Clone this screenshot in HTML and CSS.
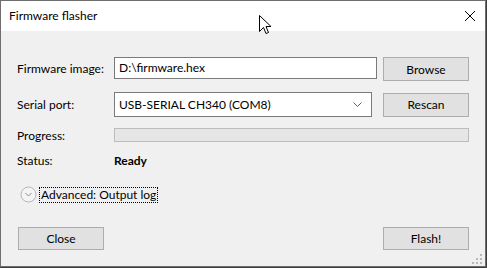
FILE: index.html
```html
<!DOCTYPE html>
<html lang="en">
<head>
    <meta charset="UTF-8">
    <title>Firmware flasher</title>
    <link rel="stylesheet" href="styles.css">
</head>
<body>
    <div class="window">
        <div class="titlebar">
            <span class="title">Firmware flasher</span>
            <svg class="close-x" width="10" height="10" viewBox="0 0 10 10">
                <path d="M0 0 L10 10 M10 0 L0 10" stroke="#000" stroke-width="1" fill="none"/>
            </svg>
        </div>

        <div class="content">
            <div class="row row-image">
                <label class="label">Firmware image:</label>
                <div class="textbox">D:\firmware.hex</div>
                <button class="btn">Browse</button>
            </div>

            <div class="row row-port">
                <label class="label">Serial port:</label>
                <div class="combobox">
                    <span>USB-SERIAL CH340 (COM8)</span>
                    <svg class="chevron" width="9" height="5" viewBox="0 0 9 5">
                        <path d="M0.5 0.5 L4.5 4.5 L8.5 0.5" stroke="#606060" fill="none"/>
                    </svg>
                </div>
                <button class="btn">Rescan</button>
            </div>

            <div class="row row-progress">
                <label class="label">Progress:</label>
                <div class="progress"></div>
            </div>

            <div class="row row-status">
                <label class="label">Status:</label>
                <span class="status">Ready</span>
            </div>

            <div class="expander">
                <svg class="expander-icon" width="17" height="17" viewBox="0 0 17 17">
                    <circle cx="8.5" cy="8.5" r="7.5" stroke="#b4b4b4" fill="#f4f4f4"/>
                    <path d="M5.5 7 L8.5 10 L11.5 7" stroke="#8a8a8a" fill="none"/>
                </svg>
                <span class="expander-text">Advanced: Output log</span>
            </div>

            <div class="footer">
                <button class="btn btn-wide">Close</button>
                <button class="btn btn-wide">Flash!</button>
            </div>

            <svg class="grip" width="11" height="11" viewBox="0 0 11 11">
                <rect x="8" y="0" width="2" height="2" fill="#b8b8b8"/>
                <rect x="4" y="4" width="2" height="2" fill="#b8b8b8"/>
                <rect x="8" y="4" width="2" height="2" fill="#b8b8b8"/>
                <rect x="0" y="8" width="2" height="2" fill="#b8b8b8"/>
                <rect x="4" y="8" width="2" height="2" fill="#b8b8b8"/>
                <rect x="8" y="8" width="2" height="2" fill="#b8b8b8"/>
            </svg>
        </div>

        <svg class="cursor" width="13" height="20" viewBox="0 0 13 20">
            <path d="M0.5 0.5 L0.5 16.5 L4.5 12.5 L7 18.5 L9.5 17.5 L7 11.5 L12 11.5 Z" fill="#fff" stroke="#000" stroke-width="1"/>
        </svg>
    </div>
</body>
</html>
```

FILE: styles.css
```css
* {
    margin: 0;
    padding: 0;
    box-sizing: border-box;
}

body {
    width: 487px;
    height: 268px;
    overflow: hidden;
    background: #3c3c3c;
    font-family: Lato, 'Noto Sans', sans-serif;
    font-size: 12px;
    line-height: 15px;
    color: #000;
}

.window {
    position: relative;
    width: 486px;
    height: 267px;
    border: 1px solid #6e6e6e;
    display: flex;
    flex-direction: column;
    background: #f0f0f0;
}

.titlebar {
    height: 30px;
    flex: none;
    background: #fff;
    display: flex;
    align-items: center;
    justify-content: space-between;
    padding: 0 10px 2px 8px;
}

.close-x {
    display: block;
    margin-top: 1px;
}

.content {
    position: relative;
    flex: 1;
    padding: 26px 16px 0 16px;
}

.row {
    display: flex;
    align-items: center;
}

.label {
    width: 97px;
}

.textbox {
    width: 263px;
    height: 22px;
    background: #fff;
    border: 1px solid #7a7a7a;
    padding: 0 4px;
    line-height: 20px;
    margin-right: 6px;
}

.combobox {
    width: 258px;
    height: 25px;
    background: #fff;
    border: 1px solid #7a7a7a;
    padding: 0 4px;
    margin-right: 11px;
    display: flex;
    align-items: center;
    justify-content: space-between;
}

.chevron {
    margin-right: 5px;
}

.btn {
    width: 86px;
    height: 24px;
    background: #e1e1e1;
    border: 1px solid #adadad;
    font-family: inherit;
    font-size: 12px;
    color: #000;
}

.row-image {
    height: 24px;
    align-items: flex-start;
}

.row-image .label {
    margin-top: 4px;
}

.row-port {
    height: 25px;
    margin-top: 11px;
}

.row-progress {
    height: 14px;
    margin-top: 11px;
}

.progress {
    width: 356px;
    height: 14px;
    background: #e6e6e6;
    border: 1px solid #bcbcbc;
}

.row-status {
    height: 15px;
    margin-top: 11px;
}

.status {
    font-weight: bold;
}

.expander {
    height: 17px;
    display: flex;
    align-items: center;
    margin-top: 18px;
    margin-left: 3px;
}

.expander-icon {
    display: block;
    margin-right: 2px;
}

.expander-text {
    border: 1px dotted #000;
    padding: 0 1px;
    line-height: 14px;
}

.footer {
    display: flex;
    justify-content: space-between;
    margin: 24px 0 0 1px;
}

.btn-wide {
    width: 86px;
    height: 23px;
}

.grip {
    position: absolute;
    right: 2px;
    bottom: 1px;
}

.cursor {
    position: absolute;
    left: 258px;
    top: 14px;
}
```
